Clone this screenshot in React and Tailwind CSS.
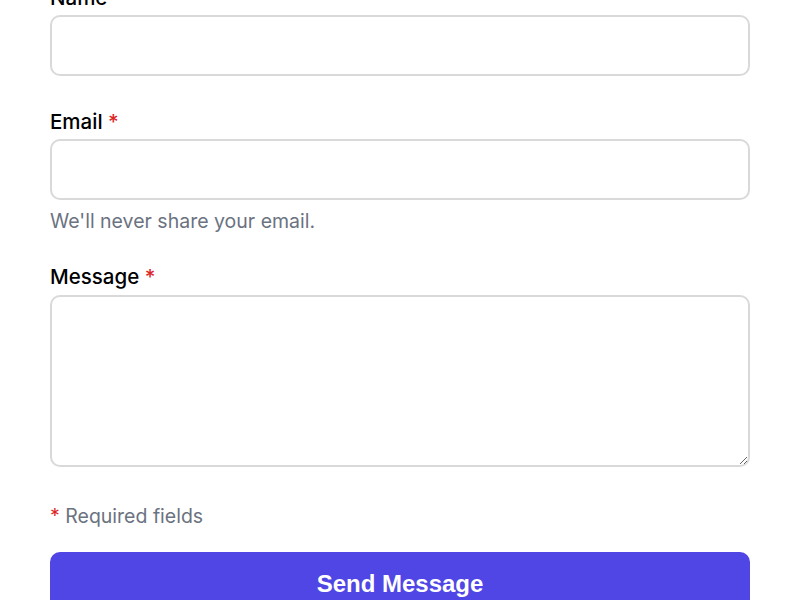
export default function App() {
  return (
    <div className="bg-white min-h-screen overflow-hidden" style={{ fontFamily: "Inter, 'Noto Sans', sans-serif" }}>
      <form className="px-[50px] mt-[-17px] flex flex-col" onSubmit={(e) => e.preventDefault()}>
        <div>
          <label htmlFor="name" className="block text-[20.5px] leading-[30px] font-medium text-black mb-[2px]">Name</label>
          <input id="name" type="text" className="block w-full h-[61px] rounded-[10px] border-2 border-[#d9d9d9] px-4 text-[20px] outline-none" />
        </div>

        <div className="mt-[31px]">
          <label htmlFor="email" className="block text-[20.5px] leading-[30px] font-medium text-black mb-[2px]">
            Email <span className="text-[#dc2626]">*</span>
          </label>
          <input id="email" type="email" className="block w-full h-[61px] rounded-[10px] border-2 border-[#d9d9d9] px-4 text-[20px] outline-none" />
          <p className="mt-[6px] text-[19.5px] leading-[30px] text-[#6b7280]">We'll never share your email.</p>
        </div>

        <div className="mt-[26px]">
          <label htmlFor="message" className="block text-[20.5px] leading-[30px] font-medium text-black mb-[3px]">
            Message <span className="text-[#dc2626]">*</span>
          </label>
          <textarea id="message" className="block w-full h-[172px] rounded-[10px] border-2 border-[#d9d9d9] px-4 py-3 text-[20px] outline-none resize-y"></textarea>
        </div>

        <p className="mt-[34px] text-[19.5px] leading-[30px] text-[#6b7280]">
          <span className="text-[#dc2626]">*</span> Required fields
        </p>

        <button
          type="submit"
          className="mt-[21px] h-[64px] w-full rounded-[10px] bg-[#4f46e5] text-white text-[24px] font-bold flex items-center justify-center"
          style={{ fontFamily: "'Liberation Sans', Arial, sans-serif" }}
        >
          Send Message
        </button>
      </form>
    </div>
  );
}
